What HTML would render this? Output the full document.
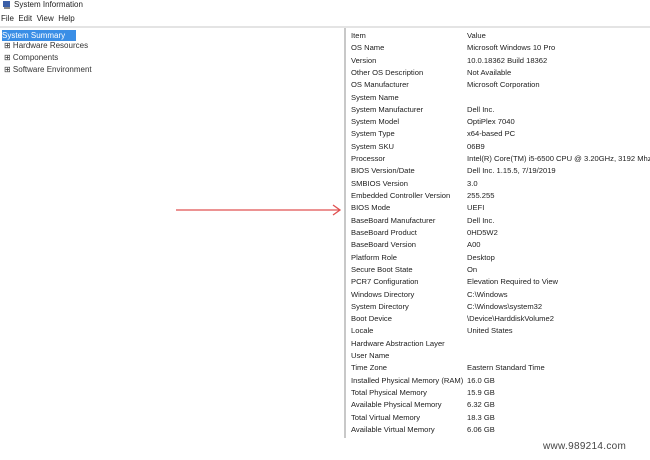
<!DOCTYPE html>
<html><head><style>
body{margin:0;width:650px;height:460px;background:#fff;font-family:"Liberation Sans",sans-serif;font-size:8px;color:#222;position:relative;overflow:hidden}
.a{position:absolute;white-space:nowrap}
.r{position:absolute;left:351px;white-space:nowrap;height:12px;line-height:12px;font-size:7.6px}
.v{position:absolute;left:467px;white-space:nowrap;line-height:12px;font-size:7.6px}
</style></head><body>
<svg class="a" style="left:2px;top:0" width="10" height="10"><rect x="1" y="1" width="7" height="6" fill="#3b5fa8"/><rect x="2" y="7" width="6" height="2" fill="#888"/></svg>
<div class="a" style="left:14px;top:0px">System Information</div>
<div class="a" style="left:1px;top:14px">File &nbsp;Edit &nbsp;View &nbsp;Help</div>
<div class="a" style="left:0;top:26px;width:650px;height:2px;background:#e4e4e4"></div>
<div class="a" style="left:2px;top:30px;width:74px;height:11px;background:#3a8ee6;color:#fff;line-height:11px">System Summary</div>
<div class="a" style="left:4px;top:41px;color:#333">⊞ Hardware Resources</div>
<div class="a" style="left:4px;top:53px;color:#333">⊞ Components</div>
<div class="a" style="left:4px;top:65px;color:#333">⊞ Software Environment</div>
<div class="a" style="left:344px;top:28px;width:2px;height:410px;background:#c8c8c8"></div>
<svg class="a" style="left:170px;top:200px" width="175" height="20"><line x1="6" y1="10" x2="170" y2="10" stroke="#e05050" stroke-width="1.3"/><polyline points="163,5 170,10 163,15" fill="none" stroke="#e05050" stroke-width="1.3"/></svg>
<div id="t"></div>
<script>
var d=[["Item","Value"],["OS Name","Microsoft Windows 10 Pro"],["Version","10.0.18362 Build 18362"],["Other OS Description","Not Available"],["OS Manufacturer","Microsoft Corporation"],["System Name",""],["System Manufacturer","Dell Inc."],["System Model","OptiPlex 7040"],["System Type","x64-based PC"],["System SKU","06B9"],["Processor","Intel(R) Core(TM) i5-6500 CPU @ 3.20GHz, 3192 Mhz,"],["BIOS Version/Date","Dell Inc. 1.15.5, 7/19/2019"],["SMBIOS Version","3.0"],["Embedded Controller Version","255.255"],["BIOS Mode","UEFI"],["BaseBoard Manufacturer","Dell Inc."],["BaseBoard Product","0HD5W2"],["BaseBoard Version","A00"],["Platform Role","Desktop"],["Secure Boot State","On"],["PCR7 Configuration","Elevation Required to View"],["Windows Directory","C:\\Windows"],["System Directory","C:\\Windows\\system32"],["Boot Device","\\Device\\HarddiskVolume2"],["Locale","United States"],["Hardware Abstraction Layer",""],["User Name",""],["Time Zone","Eastern Standard Time"],["Installed Physical Memory (RAM)","16.0 GB"],["Total Physical Memory","15.9 GB"],["Available Physical Memory","6.32 GB"],["Total Virtual Memory","18.3 GB"],["Available Virtual Memory","6.06 GB"]];
var h="";d.forEach(function(r,i){var y=30+i*12.31;h+='<div class="r" style="top:'+y+'px">'+r[0]+'</div><div class="v" style="top:'+y+'px">'+r[1]+'</div>';});
document.getElementById("t").innerHTML=h;
</script>
<div class="a" style="left:543px;top:441px;font-size:10px;color:#444;letter-spacing:0.3px">www.989214.com</div>
</body></html>
